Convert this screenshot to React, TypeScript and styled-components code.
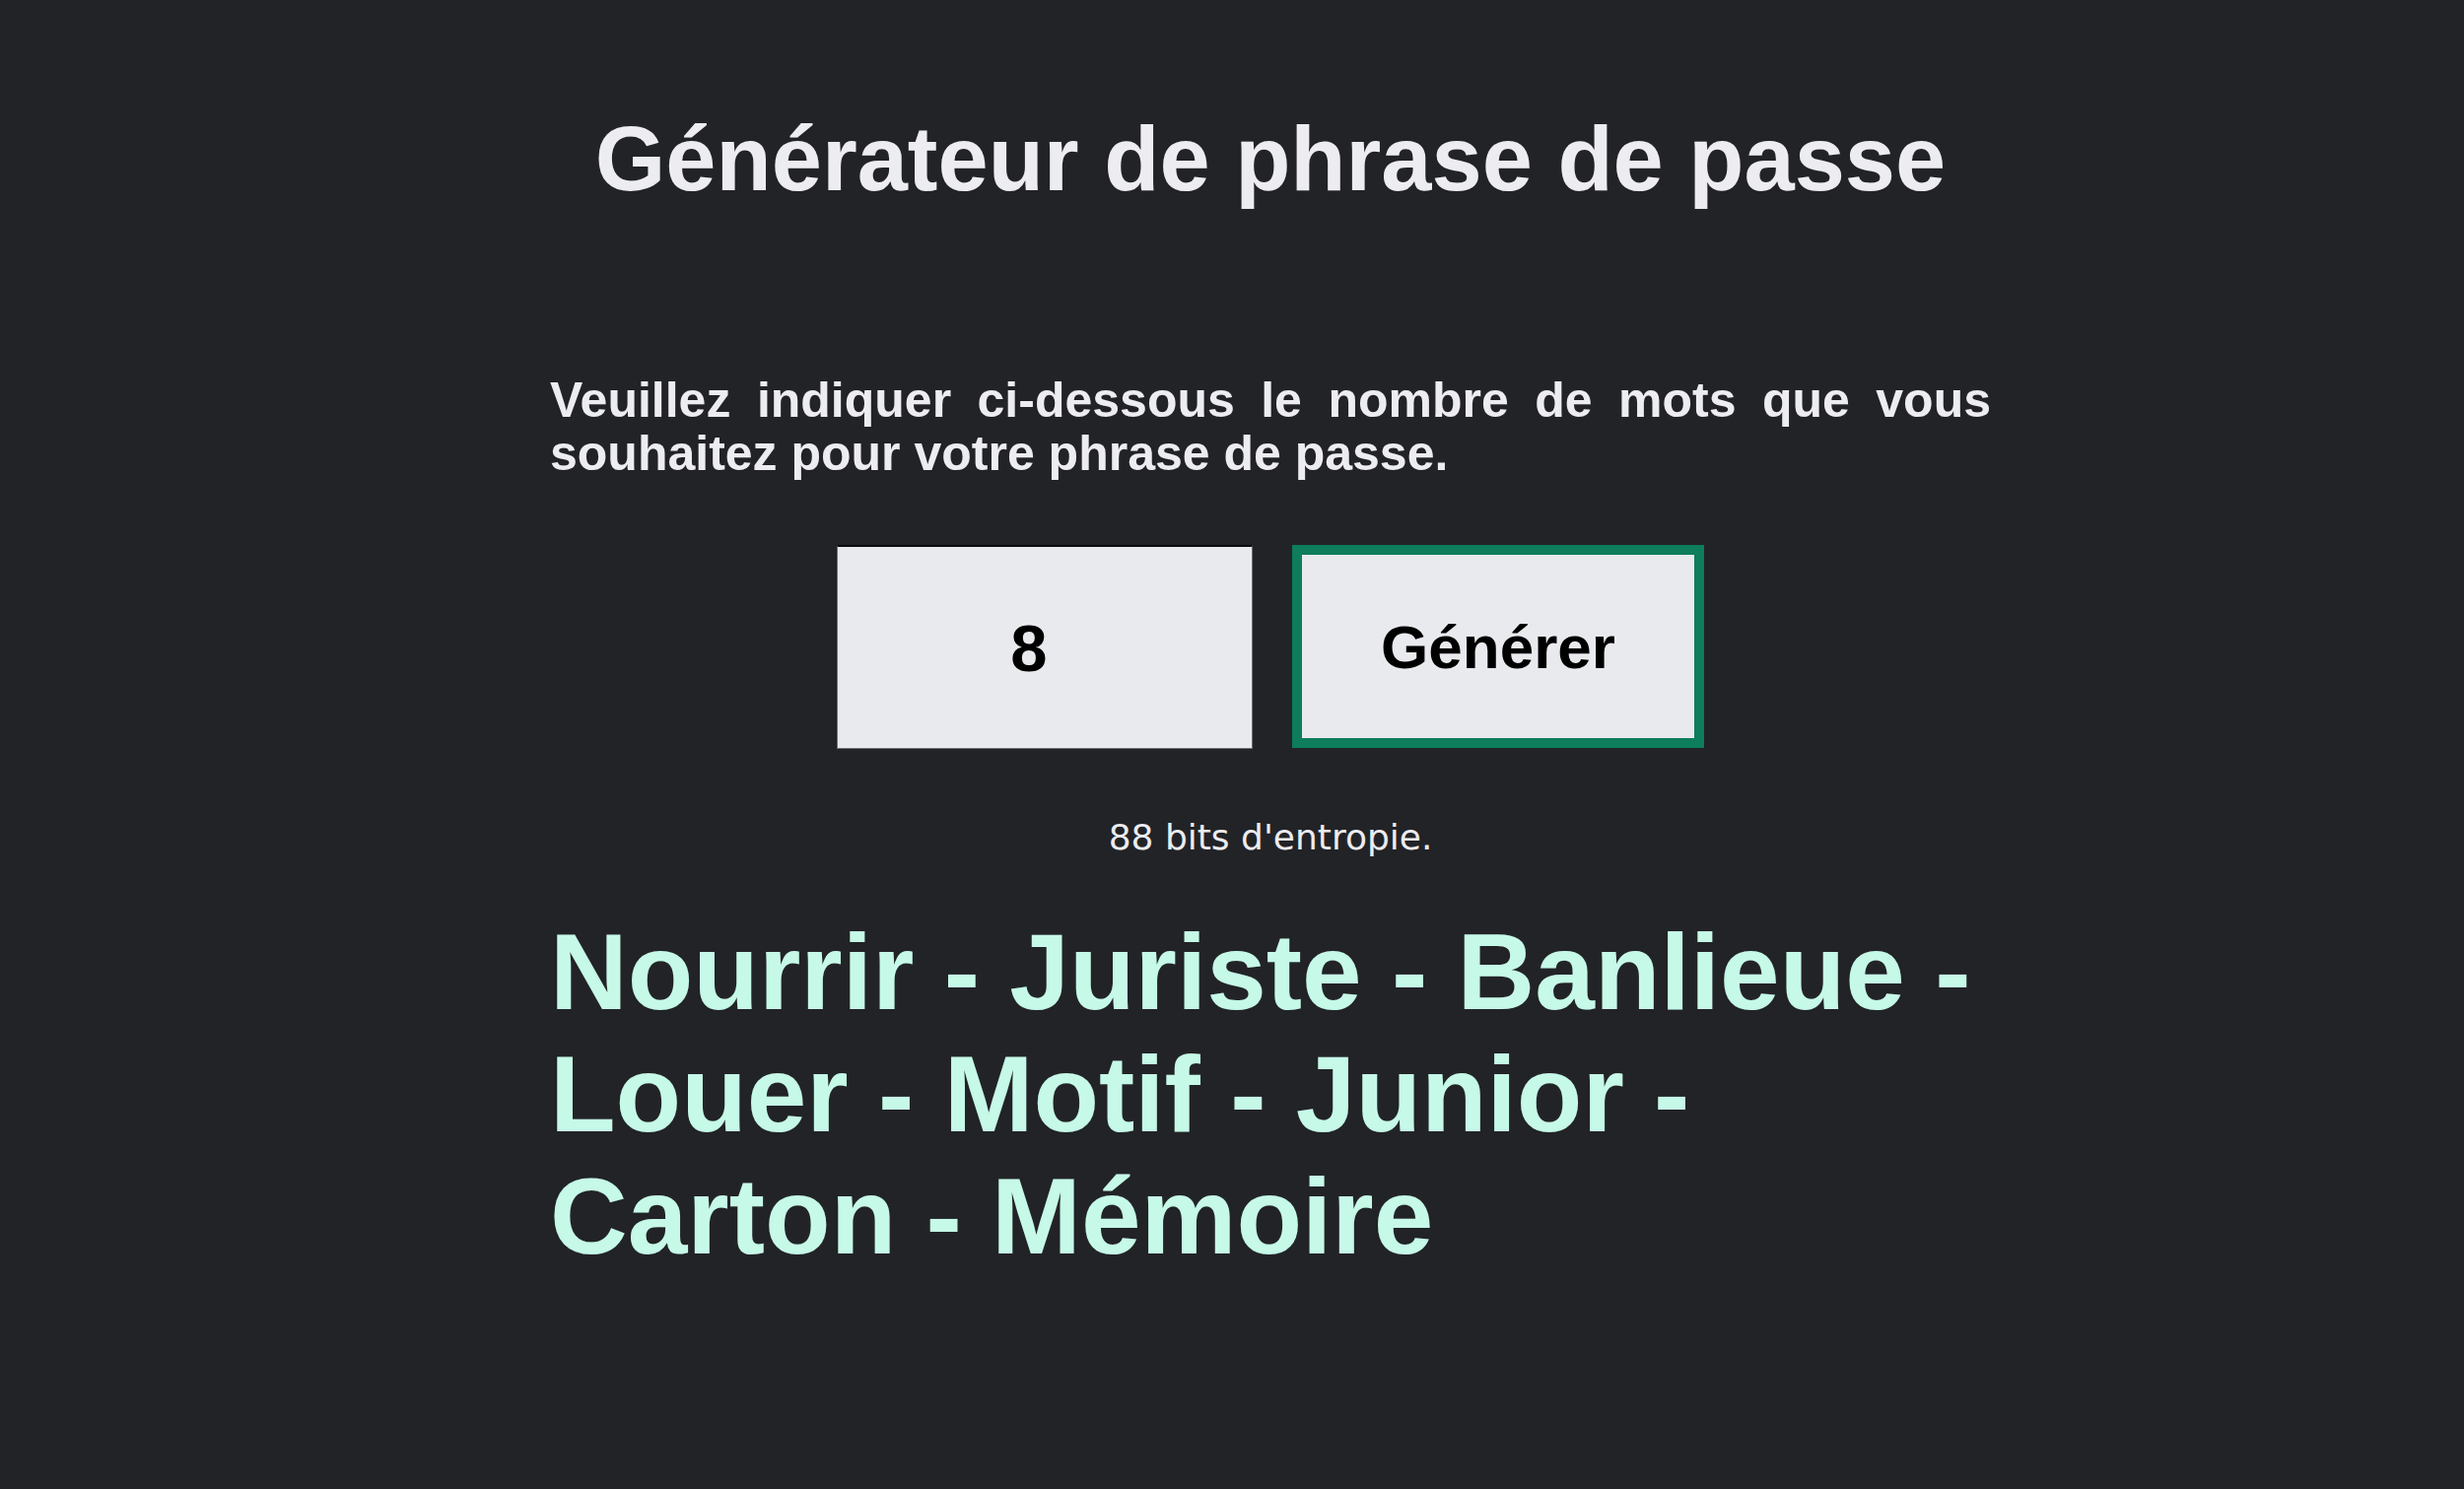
import React, { useState } from "react";
import styled, { createGlobalStyle } from "styled-components";

const GlobalStyle = createGlobalStyle`
  html, body {
    margin: 0;
    padding: 0;
    background: #222327;
  }
  body {
    font-family: "Liberation Sans", Arial, sans-serif;
  }
`;

const Page = styled.div`
  min-height: 1511px;
  background: #222327;
  padding-left: 78px;
  box-sizing: border-box;
  display: flex;
  justify-content: center;
`;

const Main = styled.main`
  width: 1462px;
  display: flex;
  flex-direction: column;
  align-items: stretch;
  padding-top: 109px;
`;

const Title = styled.h1`
  margin: 0;
  font-size: 92px;
  font-weight: 700;
  line-height: normal;
  text-align: center;
  color: #ededf1;
`;

const Intro = styled.p`
  margin: 165px 0 0;
  font-size: 50px;
  font-weight: 700;
  line-height: 54px;
  text-align: justify;
  color: #ededf1;
`;

const Controls = styled.div`
  margin-top: 66px;
  display: flex;
  justify-content: center;
  gap: 40px;
`;

const CountInput = styled.input`
  width: 422px;
  height: 207px;
  box-sizing: border-box;
  border: 1px solid #6d6e72;
  border-top: 2px solid #0c0c0e;
  background: #e9eaee;
  color: #000;
  font-family: "Liberation Sans", Arial, sans-serif;
  font-size: 67px;
  font-weight: 700;
  text-align: center;
  padding: 0 32px 0 0;
  outline: none;
`;

const GenerateButton = styled.button`
  width: 418px;
  height: 206px;
  box-sizing: border-box;
  border: 10px solid #0d7d5b;
  background: #e9eaee;
  color: #000;
  font-family: "Liberation Sans", Arial, sans-serif;
  font-size: 62px;
  font-weight: 700;
  cursor: pointer;
`;

const Entropy = styled.div`
  margin-top: 69px;
  font-family: "DejaVu Sans", sans-serif;
  font-size: 36px;
  text-align: center;
  color: #ececf0;
`;

const Passphrase = styled.div`
  margin-top: 54px;
  font-size: 109px;
  font-weight: 700;
  line-height: 124px;
  color: #c6f9e7;
`;

const words = [
  "Nourrir",
  "Juriste",
  "Banlieue",
  "Louer",
  "Motif",
  "Junior",
  "Carton",
  "Mémoire",
];

export default function App() {
  const [count, setCount] = useState("8");

  return (
    <Page>
      <GlobalStyle />
      <Main>
        <Title>Générateur de phrase de passe</Title>
        <Intro>
          Veuillez indiquer ci-dessous le nombre de mots que vous souhaitez
          pour votre phrase de passe.
        </Intro>
        <Controls>
          <CountInput
            type="text"
            value={count}
            onChange={(e) => setCount(e.target.value)}
          />
          <GenerateButton>Générer</GenerateButton>
        </Controls>
        <Entropy>{Number(count) * 11} bits d'entropie.</Entropy>
        <Passphrase>{words.join(" - ")}</Passphrase>
      </Main>
    </Page>
  );
}
